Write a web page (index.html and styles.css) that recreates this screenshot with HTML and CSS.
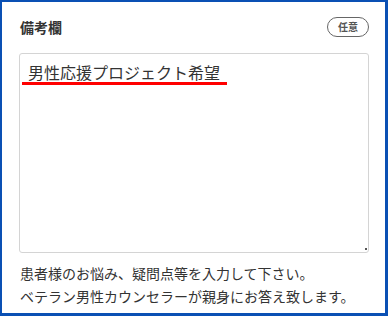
FILE: index.html
```html
<!DOCTYPE html>
<html lang="ja">
<head>
    <meta charset="UTF-8">
    <meta name="viewport" content="width=device-width, initial-scale=1.0">
    <title>備考欄</title>
    <link rel="stylesheet" href="styles.css">
</head>
<body>

    <div class="frame">
        <div class="field-head">
            <h2 class="field-title">備考欄</h2>
            <span class="badge">任意</span>
        </div>

        <div class="note-box">
            <textarea class="note-input" id="note">男性応援プロジェクト希望</textarea>
            <div class="marker"></div>
        </div>

        <p class="help-text">
            患者様のお悩み、疑問点等を入力して下さい。<br>
            ベテラン男性カウンセラーが親身にお答え致します。
        </p>
    </div>

</body>
</html>
```

FILE: styles.css
```css
body {
    font-family: "Noto Sans CJK JP", "Noto Sans", sans-serif;
    margin: 0;
    padding: 0;
    background-color: #ffffff;
    color: #333333;
}

.frame {
    box-sizing: border-box;
    width: 388px;
    height: 316px;
    border: 2px solid #0a50b4;
    border-right-width: 3px;
    border-bottom-width: 3px;
    padding: 15px 16px 0 17px;
}

.field-head {
    display: flex;
    justify-content: space-between;
    align-items: center;
    height: 20px;
}

.field-title {
    margin: 0 0 0 1px;
    font-size: 14px;
    font-weight: 700;
    line-height: 20px;
    color: #333333;
}

.badge {
    box-sizing: border-box;
    width: 42px;
    height: 20px;
    border: 1px solid #666666;
    border-radius: 10px;
    font-size: 10px;
    font-weight: 700;
    line-height: 18px;
    text-align: center;
    color: #555555;
}

.note-box {
    position: relative;
    margin-top: 16px;
}

/* small grip dot in the corner */
.note-box::after {
    content: "";
    position: absolute;
    right: 2px;
    bottom: 3px;
    width: 2px;
    height: 2px;
    background-color: #555555;
}

.note-input {
    display: block;
    box-sizing: border-box;
    width: 350px;
    height: 200px;
    margin: 0;
    padding: 6px 8px;
    border: 1px solid #d4d4d4;
    border-radius: 3px;
    font-family: "Noto Sans CJK JP", sans-serif;
    font-size: 16px;
    line-height: 24px;
    color: #333333;
    background-color: #ffffff;
    resize: none;
}

.note-input:focus {
    outline: none;
}

/* red underline drawn over the entered text */
.marker {
    position: absolute;
    left: 3px;
    top: 29px;
    width: 205px;
    height: 3px;
    background-color: #ff0000;
}

.help-text {
    margin: 9px 0 0 1px;
    font-size: 14px;
    line-height: 23px;
    color: #333333;
}
```
